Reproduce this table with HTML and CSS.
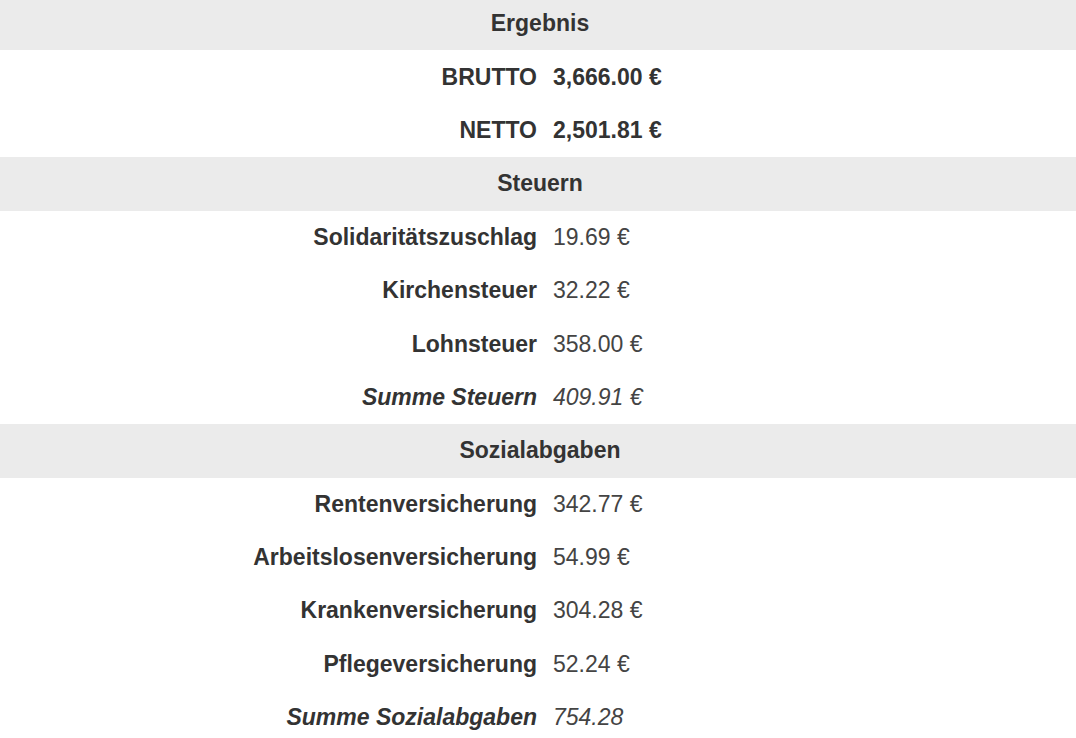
FILE: index.html
```html
<!DOCTYPE html>
<html lang="de">
<head>
<meta charset="utf-8">
<title>Ergebnis</title>
<link rel="stylesheet" href="styles.css">
</head>
<body>
<div class="result">
  <div class="head">Ergebnis</div>
  <div class="row strong"><span class="label">BRUTTO</span><span class="value">3,666.00 €</span></div>
  <div class="row strong"><span class="label">NETTO</span><span class="value">2,501.81 €</span></div>
  <div class="head">Steuern</div>
  <div class="row"><span class="label">Solidaritätszuschlag</span><span class="value">19.69 €</span></div>
  <div class="row"><span class="label">Kirchensteuer</span><span class="value">32.22 €</span></div>
  <div class="row"><span class="label">Lohnsteuer</span><span class="value">358.00 €</span></div>
  <div class="row sum"><span class="label">Summe Steuern</span><span class="value">409.91 €</span></div>
  <div class="head">Sozialabgaben</div>
  <div class="row"><span class="label">Rentenversicherung</span><span class="value">342.77 €</span></div>
  <div class="row"><span class="label">Arbeitslosenversicherung</span><span class="value">54.99 €</span></div>
  <div class="row"><span class="label">Krankenversicherung</span><span class="value">304.28 €</span></div>
  <div class="row"><span class="label">Pflegeversicherung</span><span class="value">52.24 €</span></div>
  <div class="row sum"><span class="label">Summe Sozialabgaben</span><span class="value">754.28</span></div>
</div>
</body>
</html>
```
FILE: styles.css
```css
html, body {
  margin: 0;
  padding: 0;
  background: #ffffff;
}
body {
  font-family: "Liberation Sans", Arial, sans-serif;
  font-size: 23px;
  color: #333333;
  overflow: hidden;
}
.result {
  margin-top: -3px;
  display: flex;
  flex-direction: column;
}
.head {
  height: 53.4px;
  display: flex;
  align-items: center;
  justify-content: center;
  padding-left: 4px;
  background: #ebebeb;
  font-weight: bold;
  color: #333333;
}
.row {
  height: 53.4px;
  display: grid;
  grid-template-columns: 537px 1fr;
  align-items: center;
}
.label {
  text-align: right;
  font-weight: bold;
  color: #333333;
}
.value {
  padding-left: 16px;
  color: #444444;
}
.strong .value {
  font-weight: bold;
  color: #333333;
}
.sum .label,
.sum .value {
  font-style: italic;
}
```
